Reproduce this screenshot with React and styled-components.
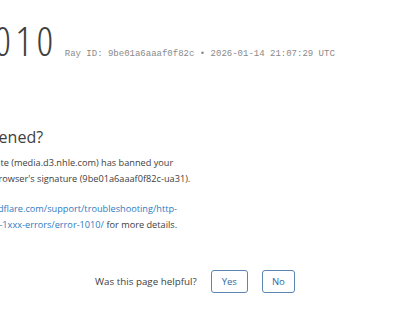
import React from "react";
import styled, { createGlobalStyle } from "styled-components";

const GlobalStyle = createGlobalStyle`
  html, body {
    margin: 0;
    padding: 0;
    background: #ffffff;
  }
  body {
    width: 400px;
    height: 312px;
    overflow: hidden;
    font-family: "Open Sans", "Noto Sans", Arial, sans-serif;
    color: #404040;
  }
`;

const Page = styled.div`
  width: 400px;
  height: 312px;
  overflow: hidden;
`;

const Content = styled.main`
  margin-left: -101px;
  width: 300px;
  padding-top: 18px;
`;

const TitleRow = styled.header`
  display: flex;
  align-items: baseline;
  gap: 7px;
  margin-left: -28px;
  white-space: nowrap;
`;

const Title = styled.h1`
  margin: 0;
  font-family: "Open Sans", sans-serif;
  font-weight: 300;
  font-stretch: 75%;
  letter-spacing: 4.5px;
  font-size: 41px;
  line-height: 44px;
  color: #404040;
`;

const RayId = styled.span`
  font-family: "Liberation Mono", "Courier New", monospace;
  font-size: 9px;
  color: #8a8a8a;
`;

const Heading = styled.h2`
  margin: 64px 0 0 18px;
  font-size: 16px;
  font-weight: 400;
  line-height: 22px;
  color: #404040;
  white-space: nowrap;
`;

const Para = styled.p`
  margin: ${(p) => p.$gap}px 0 0 0;
  font-size: 9.2px;
  line-height: 16px;
  color: #404040;
  white-space: nowrap;
`;

const Link = styled.a`
  color: #2f7bbf;
  text-decoration: none;
`;

const Feedback = styled.div`
  display: flex;
  align-items: center;
  gap: 14px;
  margin-top: 37px;
  padding-left: 95px;
`;

const Question = styled.span`
  font-size: 9.8px;
  color: #404040;
`;

const Button = styled.button`
  height: 23px;
  padding: 0 ${(p) => p.$pad}px;
  border: 1px solid #5b86b1;
  border-radius: 3px;
  background: #ffffff;
  color: #2f6aa3;
  font-family: "Open Sans", sans-serif;
  font-size: 9.5px;
  cursor: pointer;
`;

export default function App() {
  return (
    <Page>
      <GlobalStyle />
      <Content>
        <TitleRow>
          <Title>Error 1010</Title>
          <RayId>Ray ID: 9be01a6aaaf0f82c • 2026-01-14 21:07:29 UTC</RayId>
        </TitleRow>
        <Heading>What happened?</Heading>
        <Para $gap={7}>
          The owner of this website (media.d3.nhle.com) has banned your
          <br />
          access based on your browser's signature (9be01a6aaaf0f82c-ua31).
        </Para>
        <Para $gap={14}>
          <Link href="#">
            https://developers.cloudflare.com/support/troubleshooting/http-
            <br />
            status-codes/cloudflare-1xxx-errors/error-1010/
          </Link>{" "}
          for more details.
        </Para>
      </Content>
      <Feedback>
        <Question>Was this page helpful?</Question>
        <Button $pad={10}>Yes</Button>
        <Button $pad={9}>No</Button>
      </Feedback>
    </Page>
  );
}
